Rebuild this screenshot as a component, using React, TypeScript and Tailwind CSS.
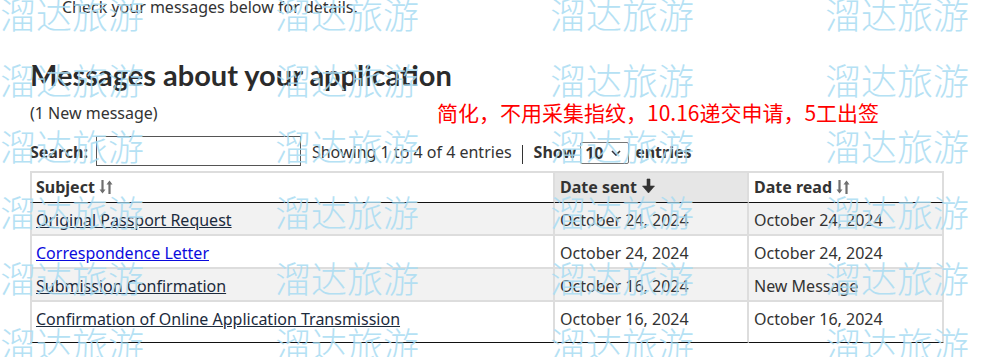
import React from 'react';

const rows = [
  { subject: 'Original Passport Request', sent: 'October 24, 2024', read: 'October 24, 2024', visited: true },
  { subject: 'Correspondence Letter', sent: 'October 24, 2024', read: 'October 24, 2024', visited: false },
  { subject: 'Submission Confirmation', sent: 'October 16, 2024', read: 'New Message', visited: true },
  { subject: 'Confirmation of Online Application Transmission', sent: 'October 16, 2024', read: 'October 16, 2024', visited: true },
];

const SortBoth = () => (
  <svg width="14" height="16" viewBox="0 0 14 16" className="ml-[4px] inline-block align-[-2px]">
    <path d="M3.5 1v12" stroke="#6f6f6f" strokeWidth="2.2" />
    <path d="M0.5 10.5 3.5 14.5 6.5 10.5z" fill="#6f6f6f" />
    <path d="M10.5 15V3" stroke="#6f6f6f" strokeWidth="2.2" />
    <path d="M7.5 5.5 10.5 1.5 13.5 5.5z" fill="#6f6f6f" />
  </svg>
);

const SortDown = () => (
  <svg width="13" height="16" viewBox="0 0 13 16" className="ml-[5px] inline-block align-[-1px]">
    <path d="M5 1h3v7h4.5L6.5 15 0.5 8H5z" fill="#333" strokeLinejoin="round" stroke="#333" strokeWidth="0.6" />
  </svg>
);

const Watermark = () => (
  <div className="pointer-events-none absolute inset-0 z-10 overflow-hidden">
    <div className="-mt-[8px] grid grid-cols-[repeat(4,275px)] auto-rows-[66px]">
      {Array.from({ length: 24 }).map((_, i) => (
        <span
          key={i}
          className="font-['Noto_Sans_CJK_SC',sans-serif] text-[36px] font-light leading-[42px] text-[#a9dcf3] opacity-85"
        >
          溜达旅游
        </span>
      ))}
    </div>
  </div>
);

export default function App() {
  return (
    <div className="relative h-[357px] w-[993px] overflow-hidden bg-white font-['Noto_Sans',sans-serif] text-[16px] leading-[22px] text-[#333]">
      <div className="pl-[30px]">
        <p className="-mt-[4px] ml-[32px]">Check your messages below for details.</p>

        <h1 className="mt-[39px] font-['Lato',sans-serif] text-[29px] font-bold leading-[35px] text-[#2b2b2b]">
          Messages about your application
        </h1>

        <div className="mt-[10px] flex">
          <p className="w-[407px]">(1 New message)</p>
          <p className="font-['Noto_Sans_CJK_SC',sans-serif] text-[21px] leading-[21px] text-[#ff0000]">
            简化，不用采集指纹，10.16递交申请，5工出签
          </p>
        </div>

        <div className="mt-[12px] flex h-[30px] items-start">
          <span className="mt-[5px] font-bold">Search:</span>
          <input type="text" className="ml-[8px] h-[30px] w-[205px] border border-[#555] bg-white outline-none" />
          <span className="mt-[5px] ml-[11px]">Showing 1 to 4 of 4 entries</span>
          <span className="mt-[9px] ml-[10px] h-[19px] border-l border-[#333]"></span>
          <span className="mt-[5px] ml-[11px] font-bold">Show</span>
          <span className="mt-[6px] ml-[4px] flex h-[22px] w-[49px] items-center rounded-[2px] border border-[#767676] pl-[4px]">
            <span className="font-bold leading-[20px]">10</span>
            <svg width="10" height="6" viewBox="0 0 10 6" className="ml-[8px]">
              <path d="M1 1l4 4 4-4" fill="none" stroke="#333" strokeWidth="1.6" />
            </svg>
          </span>
          <span className="mt-[5px] ml-[6px] font-bold">entries</span>
        </div>

        <table className="mt-[5px] w-[914px] table-fixed border-separate border-spacing-0">
          <thead>
            <tr>
              <th className="w-[525px] border-t-2 border-r-2 border-l-2 border-b border-t-[#ddd] border-r-[#ddd] border-l-[#ddd] border-b-[#111] pt-[3px] pb-[4px] pl-[4px] text-left font-bold">
                Subject
                <SortBoth />
              </th>
              <th className="w-[194px] border-t-2 border-r-2 border-b border-t-[#ddd] border-r-[#ddd] border-b-[#111] bg-[#e6e6e6] pt-[3px] pb-[4px] pl-[5px] text-left font-bold">
                Date sent
                <SortDown />
              </th>
              <th className="w-[195px] border-t-2 border-r-2 border-b border-t-[#ddd] border-r-[#ddd] border-b-[#111] pt-[3px] pb-[4px] pl-[5px] text-left font-bold">
                Date read
                <SortBoth />
              </th>
            </tr>
          </thead>
          <tbody>
            {rows.map((r, i) => {
              const odd = i % 2 === 0;
              const last = i === rows.length - 1;
              const top = i === 0 ? '' : 'border-t-2 border-t-[#ddd]';
              const pad = last ? 'pt-[6px] pb-[12px]' : 'pt-[6px] pb-[3px]';
              const bottom = last ? 'border-b border-b-[#111]' : '';
              const bg = odd ? 'bg-[#f2f2f2]' : 'bg-white';
              return (
                <tr key={r.subject} className={bg}>
                  <td className={`${top} ${bottom} ${pad} border-r-2 border-l-2 border-r-[#ddd] border-l-[#ddd] pl-[4px] align-top`}>
                    <a
                      href="#"
                      className={r.visited ? 'text-[#1c2b3d] underline' : 'text-[#0b0bdd] underline'}
                    >
                      {r.subject}
                    </a>
                  </td>
                  <td className={`${top} ${bottom} ${pad} border-r-2 border-r-[#ddd] pl-[5px] align-top`}>{r.sent}</td>
                  <td className={`${top} ${bottom} ${pad} border-r-2 border-r-[#ddd] pl-[5px] align-top`}>{r.read}</td>
                </tr>
              );
            })}
          </tbody>
        </table>
      </div>
      <Watermark />
    </div>
  );
}
